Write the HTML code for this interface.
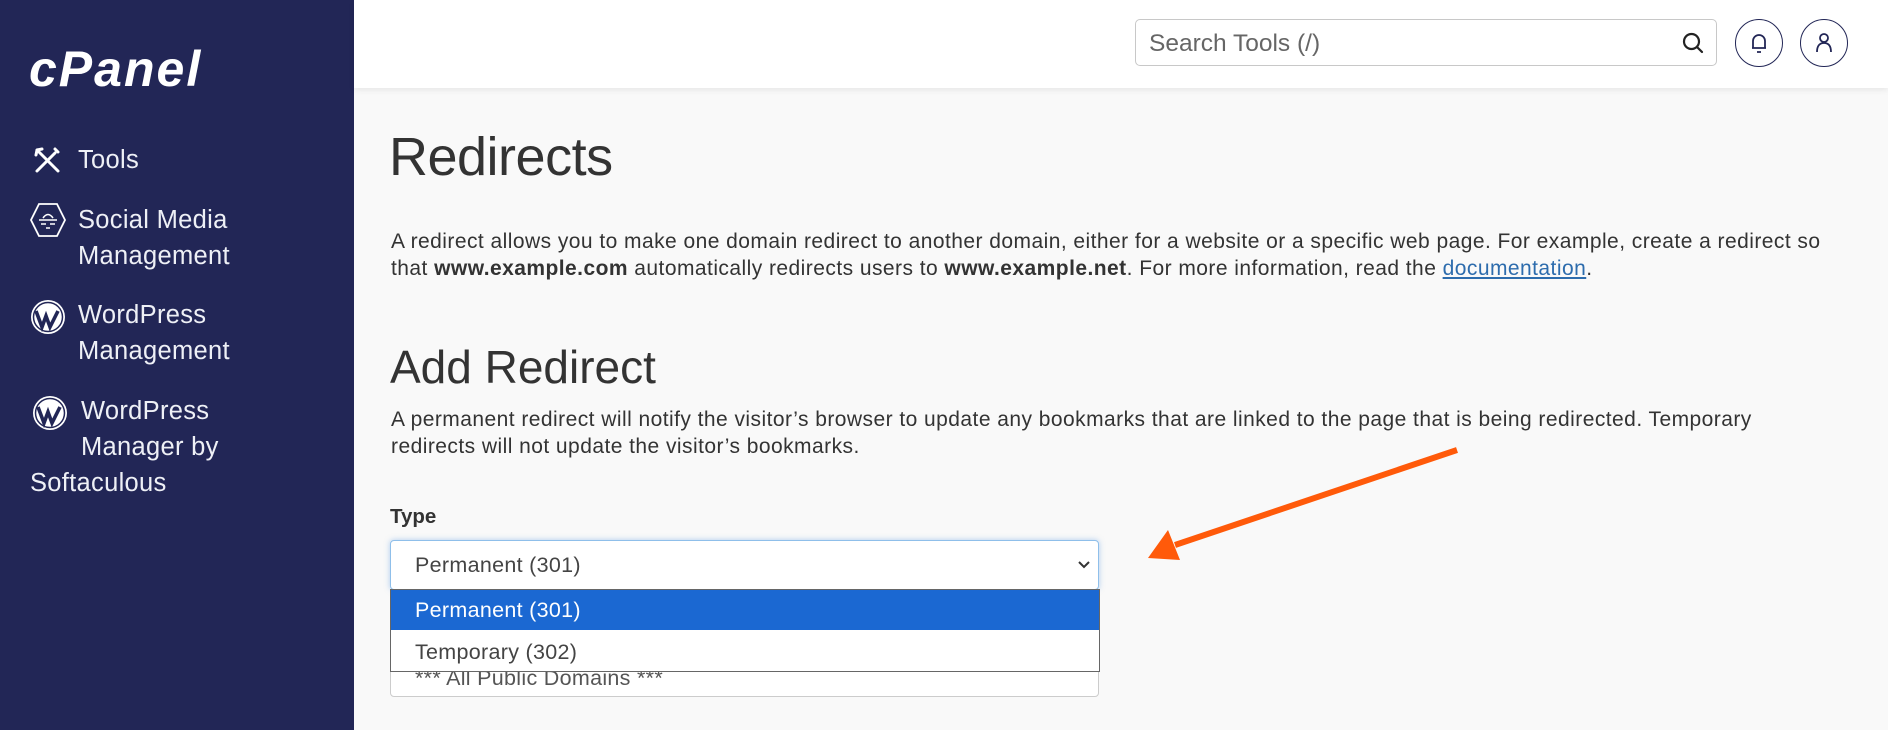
<!DOCTYPE html>
<html><head><meta charset="utf-8">
<style>
*{box-sizing:border-box;margin:0;padding:0}
body{width:1888px;height:730px;overflow:hidden;background:#f9f9f9;font-family:"Liberation Sans",sans-serif;color:#333;position:relative}
.side{position:absolute;left:0;top:0;width:354px;height:730px;background:#222656;color:#eef0f6}
.logo{position:absolute;left:29px;top:40px;font:italic bold 50px "Liberation Sans",sans-serif;letter-spacing:2px;color:#fff}
.nav{position:absolute;font-size:25.5px;line-height:36px;white-space:nowrap;letter-spacing:0.3px}
.ico{position:absolute}
.hdr{position:absolute;left:354px;top:0;width:1534px;height:88px;background:#fff;box-shadow:0 2px 6px rgba(0,0,0,.08)}
.search{position:absolute;left:1135px;top:19px;width:582px;height:47px;border:1px solid #c8c8c8;border-radius:5px;background:#fff}
.search span{position:absolute;left:13px;top:10px;font-size:24.5px;color:#666}
.circ{position:absolute;top:19px;width:48px;height:48px;border:1.5px solid #222656;border-radius:50%}
.t{position:absolute;white-space:nowrap}
.p{font-size:21px;line-height:27px;letter-spacing:0.45px}
a{color:#2d6cad;text-decoration:underline}
.sel{position:absolute;left:390px;width:709px;background:#fff;border-radius:4px}
.o{font-size:21.5px;letter-spacing:0.3px}
</style></head><body>
<div class="side">
  <div class="logo">cPanel</div>
  <svg class="ico" style="left:33px;top:146px" width="28" height="28" viewBox="0 0 28 28" fill="none" stroke="#fff" stroke-width="3" stroke-linecap="round"><path d="M4 25L13 16M15 14L22 7M22 3L25 6M4 4L25 25M4 4L9 3M4 4L3 9"/></svg>
  <div class="nav" style="left:78px;top:142px">Tools</div>
  <svg class="ico" style="left:29px;top:202px" width="38" height="36" viewBox="0 0 38 36" fill="none" stroke="#fff" stroke-width="1.8"><path d="M10 2H28L36 18L28 34H10L2 18Z"/><path d="M14 16Q19 9 24 16M10 18H28M12 22H17M21 22H26M17 26H21" stroke-width="1.6"/></svg>
  <div class="nav" style="left:78px;top:202px">Social Media<br>Management</div>
  <svg class="ico" style="left:30px;top:299px" width="36" height="36" viewBox="0 0 36 36"><circle cx="18" cy="18" r="17" fill="#fff"/><circle cx="18" cy="18" r="14.5" fill="none" stroke="#222656" stroke-width="1.5"/><path d="M6 12L12 28L16 17L20 28L28 12" fill="none" stroke="#222656" stroke-width="3.6"/></svg>
  <div class="nav" style="left:78px;top:297px">WordPress<br>Management</div>
  <svg class="ico" style="left:32px;top:395px" width="36" height="36" viewBox="0 0 36 36"><circle cx="18" cy="18" r="17" fill="#fff"/><circle cx="18" cy="18" r="14.5" fill="none" stroke="#222656" stroke-width="1.5"/><path d="M6 12L12 28L16 17L20 28L28 12" fill="none" stroke="#222656" stroke-width="3.6"/></svg>
  <div class="nav" style="left:81px;top:393px">WordPress<br>Manager by</div>
  <div class="nav" style="left:30px;top:465px">Softaculous</div>
</div>
<div class="hdr"></div>
<div class="search"><span>Search Tools (/)</span>
<svg style="position:absolute;left:545px;top:11px" width="24" height="24" viewBox="0 0 24 24" fill="none" stroke="#222" stroke-width="2.2" stroke-linecap="round"><circle cx="10.5" cy="10.5" r="7.5"/><path d="M16 16L21 21"/></svg></div>
<div class="circ" style="left:1735px"><svg style="position:absolute;left:12px;top:11px" width="22" height="24" viewBox="0 0 22 24" fill="none" stroke="#222656" stroke-width="1.8"><path d="M5 17V10A6 6 0 0 1 17 10V17H4M18 17H4M9 21H13"/></svg></div>
<div class="circ" style="left:1800px"><svg style="position:absolute;left:12px;top:11px" width="22" height="24" viewBox="0 0 22 24" fill="none" stroke="#222656" stroke-width="1.8"><circle cx="11" cy="7" r="4"/><path d="M4 21Q4 12 11 12Q18 12 18 21"/></svg></div>

<div class="t" style="left:389px;top:126px;font-size:54px;font-weight:300;color:#333;letter-spacing:-0.5px">Redirects</div>
<div class="t p" style="left:391px;top:228px">A redirect allows you to make one domain redirect to another domain, either for a website or a specific web page. For example, create a redirect so</div>
<div class="t p" style="left:391px;top:255px">that <b>www.example.com</b> automatically redirects users to <b>www.example.net</b>. For more information, read the <a>documentation</a>.</div>
<div class="t" style="left:390px;top:340px;font-size:46px">Add Redirect</div>
<div class="t p" style="left:391px;top:406px">A permanent redirect will notify the visitor’s browser to update any bookmarks that are linked to the page that is being redirected. Temporary</div>
<div class="t p" style="left:391px;top:433px">redirects will not update the visitor’s bookmarks.</div>
<div class="t" style="left:390px;top:505px;font-size:20.5px;font-weight:bold">Type</div>

<div class="sel" style="top:645px;height:52px;border:1px solid #ccc"><span class="t o" style="left:24px;top:20px;color:#555">*** All Public Domains ***</span></div>
<div class="sel" style="top:540px;height:50px;border:1px solid #8fbfea;box-shadow:0 0 6px rgba(100,160,230,.5)"><span class="t o" style="left:24px;top:12px;color:#444">Permanent (301)</span>
<svg style="position:absolute;left:686px;top:19px" width="14" height="10" viewBox="0 0 14 10" fill="none" stroke="#333" stroke-width="2"><path d="M2 2L7 7L12 2"/></svg></div>
<div style="position:absolute;left:390px;top:589px;width:710px;height:83px;background:#fff;border:1px solid #666">
  <div class="o" style="height:40px;background:#1b68d2;color:#fff;padding:8px 0 0 24px">Permanent (301)</div>
  <div class="o" style="color:#444;padding:10px 0 0 24px">Temporary (302)</div>
</div>

<svg style="position:absolute;left:0;top:0" width="1888" height="730"><line x1="1457" y1="450" x2="1175" y2="545" stroke="#ff5a0a" stroke-width="6"/><path d="M1148 558L1168 530L1180 560Z" fill="#ff5a0a"/></svg>
</body></html>
